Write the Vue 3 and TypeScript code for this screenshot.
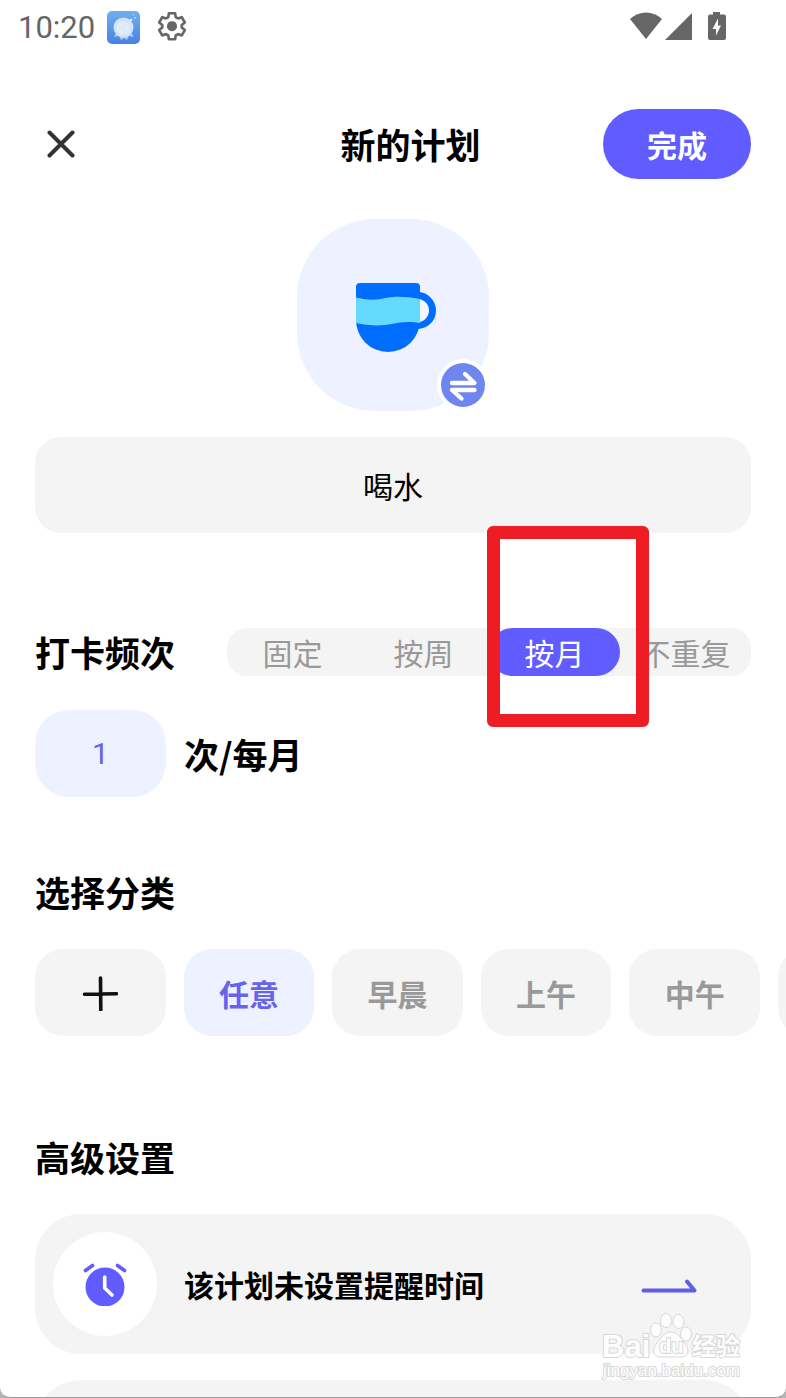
<script setup lang="ts">
import { ref } from 'vue'

const planName = ref('喝水')
const times = ref('1')

const frequencies: string[] = ['固定', '按周', '按月', '不重复']
const frequency = ref('按月')

const categories: string[] = ['任意', '早晨', '上午', '中午', '下午']
const category = ref('任意')
</script>

<template>
  <div class="screen">
    <div class="status">
      <div class="status-group">
        <span class="clock">10:20</span>
        <svg class="app-icon" viewBox="0 0 33 33" aria-hidden="true">
          <defs>
            <linearGradient id="appBg" x1="0" y1="0" x2="0" y2="1">
              <stop offset="0" stop-color="#6fb0f0" />
              <stop offset="1" stop-color="#4a80e2" />
            </linearGradient>
          </defs>
          <rect width="33" height="33" rx="5" fill="url(#appBg)" />
          <path d="M9 22 L7 26 L12 25 L14 29 L17 27 L20 29 L22 25 L27 26 L24 21 Z" fill="#a9c9f5" />
          <circle cx="16.5" cy="16.5" r="10" fill="#d3e4f8" />
          <circle cx="16" cy="17" r="6.5" fill="#e3edf9" />
          <path d="M12 15 L15 18 L20 13 M16 22 L20 19" stroke="#cfe0f6" fill="none" />
          <circle cx="24" cy="9" r="1.3" fill="#e3f0ff" />
          <circle cx="28" cy="7" r="1" fill="#b9d8fb" />
          <circle cx="26.5" cy="4" r=".7" fill="#b9d8fb" />
        </svg>
        <svg class="gear" viewBox="0 1.2 24 24" aria-hidden="true">
          <path
            d="M9.700 2.900h4.600l.5 2.900 1.700 1 2.800-1 2.300 4-2.300 1.900v1.900l2.300 1.900-2.300 4-2.800-1-1.700 1-.5 2.900H9.700l-.5-2.900-1.700-1-2.800 1-2.300-4 2.300-1.900v-1.900L2.400 9.800l2.300-4 2.800 1 1.700-1z"
            fill="none"
            stroke="#666"
            stroke-width="2"
            stroke-linejoin="round"
          />
          <circle cx="12" cy="12.600" r="3.800" fill="#666" />
        </svg>
      </div>
      <svg class="signals" viewBox="0 1 96 30" aria-hidden="true">
        <path d="M0 8 Q7 1.500 16 1.500 T32 8 L16 28 Z" fill="#666" />
        <path d="M62 2 V29 H35 Z" fill="#666" />
        <path d="M83 1h7v2.500h4a2 2 0 0 1 2 2V27a2 2 0 0 1-2 2H80a2 2 0 0 1-2-2V5.500a2 2 0 0 1 2-2h3z" fill="#666" />
        <path d="M88 7.500 L82.500 18 H86 V24.500 L91 14.500 H88 Z" fill="#fff" />
      </svg>
    </div>

    <header class="header">
      <button class="close" type="button" aria-label="关闭">
        <svg viewBox="0 0 28 28" aria-hidden="true">
          <path d="M2.500 2.500 L25.500 25.500 M25.500 2.500 L2.500 25.500" stroke="#333" stroke-width="4" stroke-linecap="round" />
        </svg>
      </button>
      <h1 class="title">新的计划</h1>
      <button class="done" type="button">完成</button>
    </header>

    <main class="body">
      <div class="avatar">
        <svg class="cup" viewBox="0 0 80 70" aria-hidden="true">
          <circle cx="61.500" cy="28.500" r="15" fill="#f3f5ff" stroke="#006dff" stroke-width="7" />
          <path d="M0 5a4 4 0 0 1 4-4h56a4 4 0 0 1 4 4v33a32 32 0 0 1-64 0z" fill="#006dff" />
          <path d="M0 15.500C8 17 16 19 27 16.500S48 14 64 17V41C52 39 45 40 36 42S12 44 0 41Z" fill="#66d9ff" />
        </svg>
        <button class="swap" type="button" aria-label="更换图标">
          <svg viewBox="0 0 52 52" aria-hidden="true">
            <circle cx="26" cy="26" r="26" fill="#fff" />
            <circle cx="26" cy="26" r="22" fill="#6f85ef" />
            <path
              d="M15 24 H37.500 L28 15 M37.500 31 H15 L24.500 39.500"
              fill="none"
              stroke="#fff"
              stroke-width="4.300"
              stroke-linecap="round"
              stroke-linejoin="round"
            />
          </svg>
        </button>
      </div>

      <input v-model="planName" class="name" type="text" aria-label="计划名称" />

      <section class="section frequency">
        <div class="row">
          <h2 id="freq-title" class="heading">打卡频次</h2>
          <div class="segments" role="radiogroup" aria-labelledby="freq-title">
            <label v-for="f in frequencies" :key="f" class="segment" :class="{ active: f === frequency }">
              <input v-model="frequency" class="hidden-radio" type="radio" name="frequency" :value="f" />
              <span>{{ f }}</span>
              <i v-if="f === '按月'" class="marker"></i>
            </label>
          </div>
        </div>
        <div class="count-row">
          <input id="times" v-model="times" class="count" type="text" inputmode="numeric" />
          <label for="times" class="heading">次/每月</label>
        </div>
      </section>

      <section class="section category">
        <h2 class="heading">选择分类</h2>
        <div class="chips">
          <button class="chip" type="button" aria-label="添加分类">
            <svg class="plus" viewBox="0 0 36 36" aria-hidden="true">
              <path d="M18.500 3 L18.800 35 M2.500 19.300 L34.500 18.700" stroke="#111" stroke-width="3.600" stroke-linecap="round" />
            </svg>
          </button>
          <button
            v-for="c in categories"
            :key="c"
            class="chip"
            :class="{ chosen: c === category }"
            type="button"
            :aria-pressed="c === category"
            @click="category = c"
          >
            {{ c }}
          </button>
        </div>
      </section>

      <section class="section advanced">
        <h2 class="heading">高级设置</h2>
        <button class="card" type="button">
          <span class="card-icon">
            <svg viewBox="0 -1 44 44" aria-hidden="true">
              <circle cx="22" cy="24" r="19.500" fill="#605cff" />
              <path d="M2.500 7.500 L9.500 2.500 M34.500 2.500 L41.500 7.500" stroke="#605cff" stroke-width="3.700" stroke-linecap="round" />
              <path d="M21.700 14 V25 L29 32" fill="none" stroke="#fff" stroke-width="3.600" stroke-linecap="round" stroke-linejoin="round" />
            </svg>
          </span>
          <span class="card-text">该计划未设置提醒时间</span>
          <svg class="arrow" viewBox="0 -1 56 18" aria-hidden="true">
            <path d="M2.500 14.500 H53.500 L46 5.500" fill="none" stroke="#605de6" stroke-width="4" stroke-linecap="round" stroke-linejoin="round" />
          </svg>
        </button>
        <div class="card"></div>
      </section>
    </main>

    <svg class="watermark" viewBox="0 0 146 72" aria-hidden="true">
      <g fill="#fff" stroke="#d4d4d4" stroke-width="1">
        <ellipse cx="56" cy="17" rx="5.500" ry="7" />
        <ellipse cx="66" cy="7.500" rx="5.500" ry="7" />
        <ellipse cx="78.500" cy="8.500" rx="5.500" ry="7" />
        <ellipse cx="86" cy="21" rx="5.500" ry="7" />
        <path d="M71 19c6 0 9 5 13 10c6 7 5 15-3 15H61c-8 0-10-7-4-14c5-6 8-11 14-11z" />
      </g>
      <g fill="#fff" stroke="#d4d4d4" stroke-width="2" paint-order="stroke" stroke-linejoin="round">
        <text class="wm-latin" x="2" y="44" font-size="31">Bai</text>
        <text class="wm-latin" x="59" y="40" font-size="20">du</text>
        <text class="wm-cjk" x="92" y="42" font-size="24">经验</text>
        <text class="wm-url" x="3" y="63" font-size="17">jingyan.baidu.com</text>
      </g>
    </svg>
  </div>
</template>

<style>
body {
  background: #b4b4b4;
}
</style>

<style scoped>
.screen {
  position: relative;
  box-sizing: border-box;
  height: 100vh;
  overflow: hidden;
  background: #fff;
  border-bottom: 1px solid #999;
  border-radius: 0 0 10px 10px;
  color: #000;
  font-family: "Noto Sans CJK SC", sans-serif;
  font-size: 30px;
}

button,
input {
  margin: 0;
  padding: 0;
  border: 0;
  font: inherit;
  color: inherit;
  background: none;
}

svg {
  display: block;
}

.status {
  display: flex;
  align-items: center;
  justify-content: space-between;
  height: 54px;
  padding: 0 60px 0 18px;
}

.status-group {
  display: flex;
  align-items: center;
}

.clock {
  padding-top: 2px;
  color: #666;
  font-family: Roboto, sans-serif;
  font-size: 31px;
  line-height: 36px;
}

.app-icon {
  width: 33px;
  height: 33px;
  margin: 0 16px 0 12px;
}

.gear {
  width: 32px;
  height: 32px;
}

.signals {
  width: 96px;
  height: 30px;
}

.header {
  display: grid;
  grid-template-columns: 183px 1fr 148px;
  align-items: center;
  margin-top: 55px;
  padding: 0 35px;
}

.close {
  display: grid;
  place-items: center;
  width: 52px;
  height: 52px;
}

.close svg {
  width: 28px;
  height: 28px;
}

.title,
.heading {
  margin: 0;
  font-size: 35px;
  line-height: 48px;
  font-weight: 700;
}

.title {
  text-align: center;
}

.done {
  height: 70px;
  border-radius: 35px;
  background: #605cff;
  color: #fff;
  font-weight: 700;
}

.body {
  padding: 40px 35px 0;
}

.avatar {
  position: relative;
  display: grid;
  place-items: center;
  width: 192px;
  height: 192px;
  margin: 0 auto;
  border-radius: 78px;
  background: #eef1ff;
}

.cup {
  width: 80px;
  height: 70px;
  margin: 4px 0 0 5px;
}

.swap {
  position: absolute;
  right: 0;
  bottom: 0;
}

.swap svg {
  width: 52px;
  height: 52px;
}

.name {
  display: block;
  box-sizing: border-box;
  width: 100%;
  height: 96px;
  margin-top: 26px;
  border-radius: 26px;
  background: #f4f4f4;
  text-align: center;
}

.frequency {
  margin-top: 95px;
}

.row {
  display: flex;
  align-items: center;
  gap: 52px;
}

.segments {
  display: grid;
  flex: 1;
  grid-template-columns: repeat(4, 1fr);
  border-radius: 20px;
  background: #f4f4f4;
  color: #999;
}

.segment {
  position: relative;
  height: 48px;
  border-radius: 24px;
  line-height: 48px;
  text-align: center;
  white-space: nowrap;
}

.segment.active {
  background: #605cff;
  color: #fff;
}

.hidden-radio {
  position: absolute;
  opacity: 0;
}

.marker {
  position: absolute;
  z-index: 1;
  top: -102px;
  left: -2px;
  box-sizing: border-box;
  width: 162px;
  height: 201px;
  border: 13px solid #ee1c24;
  border-radius: 6px;
  pointer-events: none;
}

.count-row {
  display: flex;
  align-items: center;
  gap: 18px;
  margin-top: 34px;
}

.count {
  width: 131px;
  height: 87px;
  border-radius: 34px;
  background: #eef1ff;
  color: #6664ea;
  font-family: Roboto, sans-serif;
  text-align: center;
}

.category {
  margin-top: 71px;
}

.chips {
  display: grid;
  grid-auto-flow: column;
  grid-auto-columns: calc((100% - 63px) / 5);
  gap: 18px;
  margin-top: 33px;
}

.chip {
  display: grid;
  place-items: center;
  height: 87px;
  border-radius: 28px;
  background: #f4f4f4;
  color: #999;
  font-weight: 700;
}

.chip.chosen {
  background: #eef1ff;
  color: #6664ea;
}

.plus {
  width: 36px;
  height: 36px;
}

.advanced {
  margin-top: 97px;
}

.card {
  display: flex;
  align-items: center;
  box-sizing: border-box;
  width: 100%;
  height: 140px;
  margin-top: 26px;
  padding: 0 54px 0 18px;
  border-radius: 46px;
  background: #f4f4f4;
  text-align: left;
}

.heading + .card {
  margin-top: 33px;
}

.card-icon {
  display: grid;
  place-items: center;
  width: 104px;
  height: 104px;
  border-radius: 50%;
  background: #fff;
}

.card-icon svg {
  width: 44px;
  height: 44px;
}

.card-text {
  flex: 1;
  margin-left: 27px;
  font-weight: 700;
}

.arrow {
  width: 56px;
  height: 18px;
}

.watermark {
  position: absolute;
  right: 40px;
  bottom: 12px;
  width: 146px;
  height: 72px;
  opacity: 0.9;
}

.wm-latin {
  font-family: "Liberation Sans", sans-serif;
  font-weight: 700;
}

.wm-cjk {
  font-family: "Noto Sans CJK SC", sans-serif;
  font-weight: 700;
}

.wm-url {
  font-family: "Liberation Sans", sans-serif;
}
</style>
